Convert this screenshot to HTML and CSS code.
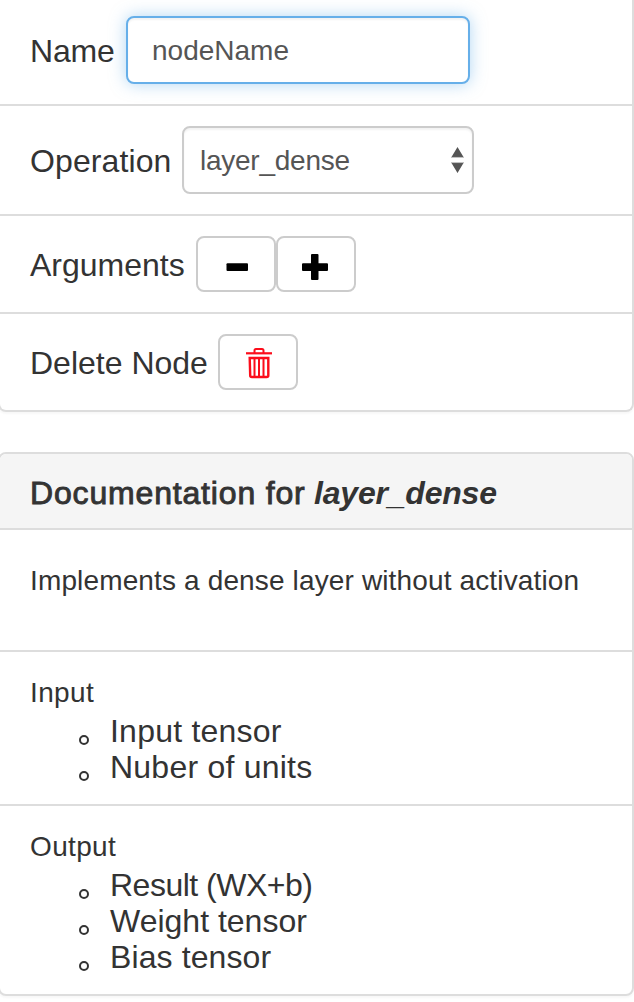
FILE: index.html
```html
<!DOCTYPE html>
<html lang="en">
<head>
<meta charset="utf-8">
<title>Node editor</title>
<link rel="stylesheet" href="styles.css">
</head>
<body>
<section class="panel node-panel">
  <div class="row row-name"><label class="label label-name" for="name">Name</label><input class="control name-input" id="name" type="text" value="nodeName"></div>
  <div class="row"><span class="label label-operation">Operation</span>
    <div class="control select"><span class="select-value">layer_dense</span>
      <svg class="select-arrows" width="14" height="26" viewBox="0 0 14 26"><path d="M7.500 0l6 10h-12zM7.500 26l6-10h-12z" fill="#555"/><path d="M1 10.400h13M1 15.600h13" stroke="#aaa" stroke-width=".8"/></svg>
    </div>
  </div>
  <div class="row"><span class="label label-arguments">Arguments</span>
    <button class="button" aria-label="Remove argument"><svg width="76" height="52" viewBox="0 0 76 52"><rect x="28.500" y="25.300" width="21.500" height="7.700" rx="1" fill="#000"/></svg></button>
    <button class="button" aria-label="Add argument"><svg width="76" height="52" viewBox="0 0 76 52"><path d="M34 16h5.500q1 0 1 1v8.300h8.500q1 0 1 1v5.700q0 1-1 1h-8.500v8q0 1-1 1h-5.500q-1 0-1-1v-8h-8q-1 0-1-1v-5.700q0-1 1-1h8v-8.300q0-1 1-1z" fill="#000"/></svg></button>
  </div>
  <div class="row"><span class="label label-delete">Delete Node</span>
    <button class="button" aria-label="Delete node"><svg width="76" height="52" viewBox="0 0 76 52" fill="none" stroke="#fc0d1b"><path d="M26 17.300h26" stroke-width="2.200"/><path d="M34.500 17v-2.500q0-1.500 1.500-1.500h6q1.500 0 1.500 1.500V17" stroke-width="2"/><path d="M29.700 22h18.600v17.500q0 1.500-1.700 1.500h-14.700q-1.700 0-1.700-1.500z" stroke-width="2.400"/><path d="M34.500 22v19M39 22v19M43.500 22v19" stroke-width="2"/></svg></button>
  </div>
</section>
<section class="panel doc-panel">
  <h3 class="doc-title"><span class="doc-title-text">Documentation for</span><em class="doc-name">layer_dense</em></h3>
  <p class="description">Implements a dense layer without activation</p>
  <div class="doc-section"><p class="section-title">Input</p>
    <ul class="list"><li class="item">Input tensor</li><li class="item">Nuber of units</li></ul>
  </div>
  <div class="doc-section"><p class="section-title">Output</p>
    <ul class="list"><li class="item item-formula">Result (WX+b)</li><li class="item item-weight">Weight tensor</li><li class="item item-bias">Bias tensor</li></ul>
  </div>
</section>
</body>
</html>
```
FILE: styles.css
```css
*, *::before { box-sizing: border-box; }
html, body { height: 100%; }
body {
  margin: 0;
  overflow: hidden;
  background: #fff;
  color: #333;
  font-family: "Liberation Sans", Arial, sans-serif;
  font-size: 32px;
}
.panel {
  width: 636px;
  margin-left: -2px;
  border: 2px solid #ddd;
  border-radius: 8px;
  background: #fff;
  box-shadow: 0 2px 2px rgba(0, 0, 0, .03);
}
.node-panel {
  border-top: 0;
  border-radius: 0 0 8px 8px;
}
.row {
  display: flex;
  align-items: center;
  padding: 20px 0 20px 30px;
  border-top: 2px solid #ddd;
}
.row-name { padding-top: 16px; border-top: 0; }
.label { flex: none; padding-top: 2px; line-height: 36px; }
.label-name { width: 96px; letter-spacing: -.2px; }
.label-operation { width: 152px; letter-spacing: .1px; }
.label-arguments { width: 166px; }
.label-delete { width: 188px; }
.control {
  height: 68px;
  border: 2px solid #ccc;
  border-radius: 8px;
  background: #fff;
  box-shadow: inset 0 2px 2px rgba(0, 0, 0, .05);
  color: #555;
  font-family: inherit;
  font-size: 28px;
}
.name-input {
  width: 344px;
  padding: 2px 24px 0;
  border-color: #66afe9;
  outline: 0;
  box-shadow: inset 0 2px 2px rgba(0, 0, 0, .05), 0 0 16px rgba(102, 175, 233, .5);
}
.select {
  display: flex;
  align-items: center;
  justify-content: space-between;
  width: 292px;
  padding: 0 8px 0 16px;
}
.select-value { padding-top: 2px; letter-spacing: -.25px; }
.button {
  display: block;
  width: 80px;
  height: 56px;
  padding: 0;
  border: 2px solid #ccc;
  border-radius: 8px;
  background: #fff;
}
.button svg { display: block; }
.doc-panel { margin-top: 40px; }
.doc-title {
  display: flex;
  height: 76px;
  margin: 0;
  padding: 20px 0 0 30px;
  border-bottom: 2px solid #ddd;
  border-radius: 6px 6px 0 0;
  background: #f5f5f5;
  font-size: 32px;
  font-weight: 400;
  line-height: 38px;
}
.doc-title-text {
  width: 284px;
  white-space: nowrap;
  letter-spacing: .83px;
  -webkit-text-stroke: .9px #333;
}
.doc-name { font-weight: 700; letter-spacing: -.2px; }
.description {
  height: 120px;
  margin: 0;
  padding: 32px 0 0 30px;
  font-size: 28px;
  line-height: 38px;
  letter-spacing: .14px;
  white-space: nowrap;
}
.doc-section {
  padding: 21px 0 19px 30px;
  border-top: 2px solid #ddd;
}
.section-title {
  margin: 0;
  font-size: 28px;
  line-height: 40px;
  letter-spacing: .35px;
}
.list {
  margin: 0;
  padding: 0 0 0 80px;
  list-style: none;
}
.item {
  display: flex;
  align-items: center;
  height: 36px;
  line-height: 36px;
  letter-spacing: .23px;
}
.item-formula { letter-spacing: -.5px; }
.item-weight { letter-spacing: 0; }
.item-bias { letter-spacing: .1px; }
.item::before {
  content: "";
  flex: none;
  width: 10px;
  height: 10px;
  margin: 18px 21px 0 -31px;
  border: 2px solid #333;
  border-radius: 50%;
}
```
